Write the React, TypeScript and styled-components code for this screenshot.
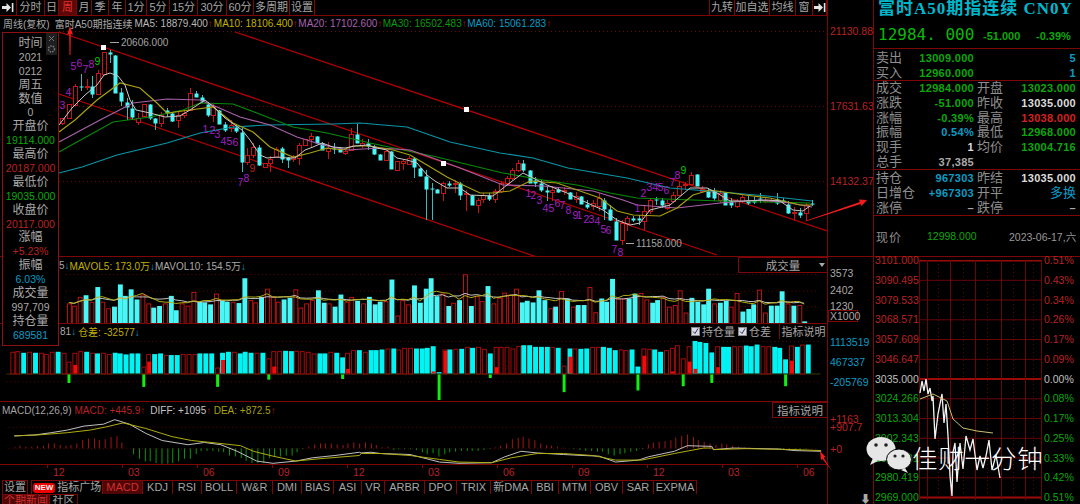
import React from "react";
import styled, { createGlobalStyle } from "styled-components";

const FONT = `"Liberation Sans", "Noto Sans CJK SC", sans-serif`;
const LINE = "#7d0606";
const RED = "#b92222";
const GREEN = "#0aa80a";
const GREY = "#a9a9a9";
const TEAL = "#0a9cc4";

const Global = createGlobalStyle`
  html, body { margin: 0; padding: 0; background: #000; }
  body { font-family: ${FONT}; font-size: 10px; color: ${GREY}; }
`;

const Page = styled.div`
  position: relative;
  display: flex;
  width: 1080px;
  height: 504px;
  overflow: hidden;
  background: #000;
`;
const Main = styled.div`
  display: flex;
  flex-direction: column;
  width: 874px;
  flex: none;
  border-right: 1px solid ${LINE};
  box-sizing: border-box;
`;
const Pane = styled.div<{ $h: number; $rule?: boolean }>`
  display: flex;
  height: ${(p) => p.$h}px;
  flex: none;
  box-sizing: border-box;
  ${(p) => (p.$rule ? `border-bottom: 1px solid ${LINE};` : "")}
`;
const Plot = styled.div<{ $rule?: boolean }>`
  display: flex;
  flex-direction: column;
  width: 828px;
  flex: none;
  box-sizing: border-box;
  border-right: 1px solid ${LINE};
  ${(p) => (p.$rule ? `border-bottom: 1px solid ${LINE};` : "")}
  min-height: 0;
`;
const Axis = styled.div<{ $top?: number }>`
  display: flex;
  flex-direction: column;
  flex: 1;
  min-width: 0;
  overflow: hidden;
  padding-top: ${(p) => p.$top ?? 0}px;
`;
const AxisLabel = styled.div<{ $h: number; $c: string }>`
  height: ${(p) => p.$h}px;
  line-height: 14px;
  padding-left: 2px;
  color: ${(p) => p.$c};
  font-size: 10.5px;
  white-space: nowrap;
  flex: none;
`;
const ScaleBox = styled.div`
  width: 30px;
  height: 12px;
  line-height: 11px;
  box-sizing: border-box;
  padding-left: 1px;
  border: 1px solid ${LINE};
  color: ${GREY};
  font-size: 10.5px;
  white-space: nowrap;
`;
const DownGlyph = styled.div`
  color: #aaa;
  font-size: 11px;
  line-height: 11px;
  text-align: right;
  padding-right: 2px;
  font-weight: bold;
`;

const Toolbar = styled.div`
  display: flex;
  height: 16px;
  flex: none;
  box-sizing: border-box;
  border-bottom: 1px solid ${LINE};
`;
const ToolBtn = styled.div<{ $w: number; $active?: boolean }>`
  width: ${(p) => p.$w}px;
  flex: none;
  box-sizing: border-box;
  display: flex;
  align-items: center;
  justify-content: center;
  border-right: 1px solid ${LINE};
  font-size: 11px;
  line-height: 15px;
  color: ${(p) => (p.$active ? "#e23030" : "#a6a6a6")};
  background: ${(p) => (p.$active ? "#5c0808" : "transparent")};
  white-space: nowrap;
`;
const ToolSpacer = styled.div`
  flex: 1;
  border-right: 1px solid ${LINE};
`;

const Legend = styled.div<{ $h: number; $left?: number }>`
  display: flex;
  align-items: center;
  height: ${(p) => p.$h}px;
  flex: none;
  padding-left: ${(p) => p.$left ?? 3}px;
  font-size: 10px;
  white-space: nowrap;
`;
const Item = styled.span<{ $c: string; $gap?: number }>`
  color: ${(p) => p.$c};
  margin-left: ${(p) => p.$gap ?? 0}px;
`;
const Up = styled.span`
  color: #b01818;
`;
const Down = styled.span`
  color: ${TEAL};
`;
const Boxed = styled.div<{ $w: number; $h: number }>`
  margin-left: auto;
  width: ${(p) => p.$w}px;
  height: ${(p) => p.$h}px;
  flex: none;
  box-sizing: border-box;
  border: 1px solid ${LINE};
  border-right: none;
  display: flex;
  align-items: center;
  justify-content: center;
  position: relative;
  color: #a6a6a6;
  font-size: 11.5px;
`;
const Caret = styled.span`
  position: absolute;
  right: 2px;
  top: 5px;
  width: 0;
  height: 0;
  border-left: 3px solid transparent;
  border-right: 3px solid transparent;
  border-top: 4px solid #aaa;
`;
const Checks = styled.div`
  margin-left: auto;
  display: flex;
  align-items: center;
  height: 13px;
  font-size: 11px;
  color: #a6a6a6;
`;
const Check = styled.span`
  width: 9px;
  height: 9px;
  margin: 0 2px 0 3px;
  background: #d8dce8;
  border: 1px solid #888;
  box-sizing: border-box;
  display: flex;
  align-items: center;
  justify-content: center;
`;
const Explain = styled.span`
  width: 47px;
  margin-left: 8px;
  border-left: 1px solid ${LINE};
  text-align: center;
`;
const Chart = styled.svg`
  display: block;
  flex: 1;
  min-height: 0;
  width: 827px;
`;

const Dates = styled.div`
  display: grid;
  grid-template-columns: repeat(11, 75px);
  padding-left: 47px;
  height: 13px;
  flex: none;
`;
const DateCell = styled.div`
  position: relative;
  color: ${RED};
  font-size: 10.5px;
  line-height: 14px;
  padding-left: 6px;
  &::before {
    content: "";
    position: absolute;
    left: 0;
    top: 0;
    width: 1px;
    height: 3px;
    background: ${LINE};
  }
`;

const Tabs = styled.div<{ $pad?: number }>`
  display: flex;
  padding-left: 2px;
  padding-top: ${(p) => p.$pad ?? 0}px;
  height: 100%;
  box-sizing: border-box;
`;
const Tab = styled.div<{ $w: number; $active?: boolean; $gap?: number }>`
  width: ${(p) => p.$w}px;
  margin-left: ${(p) => p.$gap ?? 0}px;
  flex: none;
  box-sizing: border-box;
  display: flex;
  align-items: center;
  justify-content: center;
  gap: 2px;
  border: 1px solid ${LINE};
  border-left-width: ${(p) => (p.$gap === undefined ? 0 : 1)}px;
  border-bottom: none;
  font-size: 11px;
  line-height: 13px;
  white-space: nowrap;
  overflow: hidden;
  color: ${(p) => (p.$active ? "#d03030" : "#a6a6a6")};
  background: ${(p) => (p.$active ? "#4e0606" : "transparent")};
`;
const NewBadge = styled.span`
  background: #e00;
  color: #f4f4f4;
  border-radius: 3px;
  padding: 0 2px;
  font-size: 8px;
  font-weight: bold;
  line-height: 10px;
`;

const InfoBox = styled.div`
  position: absolute;
  left: 2px;
  top: 32px;
  width: 57px;
  height: 314px;
  box-sizing: border-box;
  background: #000;
  border: 1px solid #8f1010;
  display: grid;
  grid-auto-rows: 13.9px;
  padding-top: 3px;
  justify-items: center;
`;
const InfoLine = styled.div<{ $c?: string; $zh?: boolean }>`
  color: ${(p) => p.$c ?? GREY};
  font-size: ${(p) => (p.$zh ? 12 : 10.5)}px;
  line-height: 14px;
  white-space: nowrap;
`;
const BoxIcons = styled.svg`
  position: absolute;
  right: 0;
  top: 0;
  width: 12px;
  height: 24px;
`;

const Side = styled.div`
  flex: 1;
  min-width: 0;
  display: flex;
  flex-direction: column;
`;
const Headline = styled.div`
  height: 49px;
  flex: none;
  box-sizing: border-box;
  border-bottom: 1px solid ${LINE};
  padding-left: 4px;
`;
const Title = styled.div`
  color: #00b8cc;
  font-family: "Liberation Serif", "Noto Sans CJK SC", serif;
  font-weight: bold;
  font-size: 17px;
  line-height: 18px;
  letter-spacing: 1px;
  white-space: nowrap;
`;
const PriceRow = styled.div`
  display: flex;
  align-items: baseline;
  margin-top: 7px;
  color: ${GREEN};
  white-space: nowrap;
`;
const BigPrice = styled.span`
  font-family: "DejaVu Sans Mono", monospace;
  font-size: 16px;
  width: 105px;
  color: #0ab80a;
`;
const Delta = styled.span<{ $w: number }>`
  width: ${(p) => p.$w}px;
  font-weight: bold;
  font-size: 11px;
  flex: none;
`;
const Block = styled.div<{ $h: number; $pad?: number; $rule?: boolean }>`
  height: ${(p) => p.$h}px;
  flex: none;
  box-sizing: border-box;
  padding-top: ${(p) => p.$pad ?? 0}px;
  display: flex;
  flex-direction: column;
  ${(p) => (p.$rule === false ? "" : `border-bottom: 1px solid ${LINE};`)}
`;
const Row = styled.div`
  flex: 1;
  display: grid;
  grid-template-columns: 101px 99px;
  align-items: center;
  padding-left: 2px;
  min-height: 0;
`;
const Half = styled.div<{ $inset?: number }>`
  display: flex;
  justify-content: space-between;
  align-items: center;
  white-space: nowrap;
  padding-right: ${(p) => p.$inset ?? 0}px;
`;
const Label = styled.span`
  color: #8f8f8f;
  font-size: 13px;
  line-height: 14px;
`;
const Val = styled.span<{ $c: string }>`
  color: ${(p) => p.$c};
  font-size: 11px;
  font-weight: bold;
  line-height: 14px;
  letter-spacing: 0.3px;
`;
const ZhVal = styled.span`
  color: ${TEAL};
  font-size: 13px;
  line-height: 14px;
`;
const NowRow = styled.div`
  display: flex;
  align-items: center;
  height: 41px;
  flex: none;
  box-sizing: border-box;
  padding-left: 2px;
  border-bottom: 1px solid ${LINE};
  white-space: nowrap;
`;
const NowLabel = styled.span`
  width: 51px;
  color: #8f8f8f;
  font-size: 12px;
  letter-spacing: 1px;
`;
const NowPrice = styled.span`
  width: 82px;
  color: ${GREEN};
  font-size: 10.5px;
`;
const NowDate = styled.span`
  color: #9a9a9a;
  font-size: 10.5px;
`;
const Mini = styled.div`
  display: flex;
  padding-top: 3px;
  flex: 1;
`;
const MiniScale = styled.div<{ $w: number; $pad?: number }>`
  width: ${(p) => p.$w}px;
  padding-left: ${(p) => p.$pad ?? 1}px;
  flex: none;
  margin-top: -9px;
  box-sizing: border-box;
`;
const MiniLabel = styled.div<{ $c: string }>`
  height: 19.75px;
  line-height: 19.75px;
  color: ${(p) => p.$c};
  font-size: 10.5px;
  white-space: nowrap;
`;
const MiniChart = styled.svg`
  width: 123px;
  height: 240px;
  flex: none;
  display: block;
`;

const Overlay = styled.svg`
  position: absolute;
  left: 0;
  top: 0;
  width: 1080px;
  height: 504px;
  pointer-events: none;
`;
const Watermark = styled.div`
  position: absolute;
  left: 912px;
  top: 441px;
  color: #fff;
  font-family: "Noto Sans CJK SC", sans-serif;
  font-weight: 300;
  font-size: 25.5px;
  line-height: 32px;
  letter-spacing: 0.8px;
  white-space: nowrap;
`;

type C = [number, 0 | 1, number, number, number?, number?];
const candles: C[] = [
  [62,0,118,123,118,125],[69,0,104,118],[75,0,86,105,84,106],[81,1,86,87,74,91],[87,0,86,87,79,90],[92,1,86,94,76,98],[98,0,73,94,70,95],[104,0,52,74],[110,1,52,54,50,63],[115,1,55,93],
  [121,1,92,101,88,106],[127,1,102,107,98,120],[132,1,108,117,100,120],[138,0,118,122,113,125],[144,0,104,116],[150,1,104,118,104,120],[155,1,118,123,118,130],[161,0,115,123,112,127],[167,1,110,113,108,117],[172,1,113,121,113,122],
  [178,0,115,120,112,128],[184,0,113,115,110,118],[190,0,93,110,88,110],[196,1,93,97,91,97],[202,1,97,101,95,103],[208,1,104,115,102,117],[213,0,106,115,104,122],[219,1,110,124],[225,1,124,130,122,132],[231,0,125,128,120,132],
  [236,1,127,131,125,133],[242,1,132,162,128,172],[247,0,155,162,148,165],[253,0,147,155,143,158],[259,1,147,165,145,166],[265,0,163,167],[270,0,159,163,156,172],[276,0,149,157,147,157],[282,1,148,159,147,163],[288,1,157,160,157,168],
  [293,0,157,159,155,162],[299,0,145,158,143,165],[305,0,139,145],[311,0,136,139,133,148],[317,1,136,143],[322,1,143,150,142,150],[328,0,148,151,142,159],[334,1,148,149,143,154],[340,1,148,152],[345,0,151,153,150,155],
  [351,0,134,150,128,150],[357,1,134,143,124,143],[362,0,143,145,139,148],[368,1,143,146,139,150],[374,1,146,154,145,155],[380,1,154,160],[386,0,151,160,150,160],[391,1,151,169],[397,0,161,170],[403,0,161,163,159,170],
  [409,0,158,164,156,165],[414,1,158,167,157,178],[420,1,168,176],[426,1,176,189,170,220],[432,1,188,189,183,220],[437,1,189,193],[443,0,183,193,182,201],[449,1,183,185,181,187],[455,0,183,184,180,193],[460,1,183,195,182,200],
  [466,0,193,194,190,211],[472,1,195,205],[478,0,200,205,198,213],[483,0,195,199,193,203],[489,1,195,199,193,201],[495,0,191,199,189,203],[501,0,183,191,181,193],[507,0,178,183,176,186],[512,0,170,178,168,180],[518,0,163,170,160,172],
  [523,1,163,170,160,172],[530,1,170,183],[535,1,180,183,177,187],[541,1,183,190,180,192],[547,1,190,192,186,201],[552,0,190,192,186,201],[558,1,189,192,188,193],[564,0,190,191,187,195],[570,1,192,199],[576,0,196,199,192,203],
  [581,1,196,204],[587,1,204,207,200,209],[593,0,203,206,200,210],[599,0,198,206,193,211],[604,1,200,209,198,220],[610,1,209,220,205,221],[616,1,221,240,218,240],[622,0,223,240,220,245],[627,0,218,223,216,231],[633,1,218,220,216,222],
  [639,1,218,220,215,225],[644,0,211,221,205,230],[650,0,200,211,198,214],[656,1,199,200,197,205],[662,1,200,205,198,208],[667,0,203,208,200,210],[673,0,195,201,192,203],[679,0,186,195,182,196],[685,0,184,185,182,190],[691,0,175,184,172,185],
  [697,1,174,186],[702,0,189,191,186,193],[708,1,191,197,188,198],[714,1,191,198,188,201],[720,0,193,200,190,203],[725,1,192,205],[731,1,201,205,198,208],[737,0,201,206,199,208],[742,0,197,201,195,203],[748,1,200,203,196,205],
  [754,1,200,202,197,204],[760,1,198,199,193,203],[765,0,200,201,197,203],[771,0,200,201,198,203],[777,1,199,203,193,205],[783,1,200,202,198,204],[788,1,204,213,201,214],[794,0,212,213,207,220],[800,1,212,215,208,218],[806,0,205,213,203,221],[812,1,203,204,200,206],
];

const volume = "r405 r412 r385 c380 r400 c355 r400 r420 c415 c347 c382 c362 c393 r378 r405 c418 c413 r405 c382 c426 r405 r412 r370 c400 c402 c408 r375 c397 c400 r400 c404 c328 r395 r402 c385 r360 r385 r400 c393 c388 r362 r418 r405 r395 c365 c403 r405 c415 c378 r400 r385 c397 r405 c385 c408 c400 r398 c332 r442 r395 r408 c350 c403 c360 c328 c383 r375 c413 r403 c395 r316 c413 r383 r398 c352 r405 r388 r372 r378 r360 c402 c397 c402 c365 c395 r420 c415 r367 c390 r415 c410 c410 r355 r432 c390 c400 c330 r390 r390 c390 c375 r373 r393 c403 c395 r385 r415 r410 r365 r433 c388 c400 c408 c360 r405 c403 c397 r415 r373 c430 c422 c408 r363 r433 c412 c412 c368 r405 c412 r410 c460"
  .split(" ")
  .map((s) => ({ cyan: s[0] === "c", top: +s.slice(1) / 3 + 168 }));

const position = "r45 r43 c48 r45 c48 r48 r52 r45 c45 r48 r75:0:140 r48:85 r43 c45 r48 c50 r48 r52 c48 c50 c53 c50 c50 r90:0:152 r52:75 c52 c50 r55 c55 c55 r52 r52 r52 c50 c50 c50 r93:0:152 c48:70 c45 r45 c50 c45 c48 r48 c48 r65:0:130 r43:90 r43 c42 c43 r42 r43 r45 r50 c50 c50 r45 c48 c62:0:128 r48:97 r40 c40 r45 c40 c40 c38 r35 c35 r38 r33 r33 c35 c35 c33 c28:105 c107:0:192 r38:42 c38 r36 c36 r30 c33 r30 r36 c50:0:125 r30:92 r30 r30 r35 r27 c25 c25 c30 c30 c30 r30 c33 r87:0:168 c35:60 r35 c36 c35 r30 r30 c30 c33 c40 r38 r40 c38 c90:0:163 r35:57 r36 c38 c45 r40 r33:105 r25 r65:0:150 r28:75 c12:97 c15 c18 c47:0:140 r28:92 c30 c30 r28 r28 c26 c28 c23 r28 r28 c30 c33 c68:0:150 r26:72 c30 r23 c23"
  .split(" ")
  .map((s) => {
    const [head, fill, drop] = s.slice(1).split(":").map(Number);
    return { cyan: s[0] === "c", top: head / 3 + 336, fill: fill ? fill / 3 + 336 : 0, drop: drop ? drop / 3 + 336 : 0 };
  });

const histogram = [3,8,5,5,7,8,15,15,10,8,10,15,25,30,30,25,28,35,37,18,0,-18,-32,-40,-40,-45,-47,-47,-45,-40,-32,-32,-18,-8,-8,-8,-10,-12,-22,-25,-30,-38,-45,-45,-45,-30,-25,-25,-22,-22,-12,-2,5,12,15,15,15,12,10,15,18,15,18,15,10,3,5,-5,-3,-2,-3,-5,-12,-18,-15,-25,-18,-12,-10,-8,-8,-8,-8,-5,-2,3,8,15,28,32,35,30,25,15,10,8,5,2,0,-2,-5,-8,-8,-10,-10,-18,-22,-18,-15,-10,-8,-2,12,18,20,22,25,33,38,42,35,25,20,15,10,15,12,8,5,3,2,1,1,0,0,-1,-2,-2,-3,-3,-2];

type P = [number, number][];
const ma5: P = [[59,125],[72,108],[85,95],[97,85],[104,75],[110,73],[118,76],[125,85],[130,100],[136,110],[150,113],[165,117],[180,116],[190,110],[205,100],[215,108],[225,118],[242,130],[250,140],[260,155],[267,158],[277,157],[287,158],[295,158],[305,150],[313,147],[322,143],[333,147],[345,148],[355,146],[367,145],[377,148],[387,150],[397,158],[407,160],[417,163],[427,175],[435,181],[447,188],[460,188],[470,195],[493,196],[507,185],[523,173],[533,178],[547,185],[567,193],[583,201],[603,210],[617,220],[630,225],[640,223],[650,210],[670,205],[690,188],[707,188],[717,193],[730,201],[743,201],[767,200],[780,201],[793,210],[803,211],[810,206]];
const ma10: P = [[59,132],[75,120],[97,100],[120,83],[140,88],[157,103],[167,113],[190,110],[213,107],[233,123],[253,132],[270,147],[293,157],[310,153],[327,148],[343,150],[353,146],[370,146],[393,150],[410,155],[427,165],[447,177],[463,185],[480,193],[493,193],[510,191],[530,181],[557,183],[580,191],[600,198],[617,211],[633,215],[660,216],[677,208],[693,195],[710,190],[745,195],[770,198],[800,205],[812,205]];
const ma20: P = [[59,142],[100,120],[133,103],[167,99],[200,100],[217,107],[240,117],[270,125],[297,137],[323,145],[347,150],[380,148],[410,150],[430,157],[460,168],[503,185],[543,186],[593,191],[623,200],[637,205],[677,208],[720,203],[760,200],[790,203],[812,207]];
const ma30: P = [[59,152],[113,122],[150,117],[183,110],[200,103],[233,104],[262,115],[293,127],[327,133],[370,143],[403,150],[437,157],[482,168],[503,173],[543,180],[577,185],[610,193],[637,198],[693,200],[720,201],[810,203]];
const ma60: P = [[59,173],[82,167],[117,155],[167,143],[200,133],[233,127],[267,125],[333,124],[360,123],[407,127],[450,142],[500,153],[533,158],[568,168],[627,178],[670,188],[733,193],[767,196],[812,201]];

const scaleM = (pts: number[]): P => {
  const out: P = [];
  for (let i = 0; i < pts.length; i += 2) out.push([pts[i] / 3, pts[i + 1] / 3 + 336]);
  return out;
};
const shift = (p: P, dx: number): P => p.map(([x, y]) => [x + dx, y]);
const diff: P = [
  ...scaleM([17,298,80,295,130,288,180,280,230,268,290,262,325,248,370,262,420,290,470,312,550,325,600,318,650,325,700,345,760,375,810,382,880,375,930,365,1000,358,1075,348]),
  ...shift(scaleM([0,350,30,348,60,352,150,355,190,365,240,378,300,382,400,380,440,362,490,345,540,350,620,355,680,358,730,360,780,378,850,372,880,362,960,345,1000,328,1075,330]), 360),
  ...shift(scaleM([0,340,60,335,200,338,250,343,330,345]), 720),
];
const dea: P = [
  ...scaleM([17,298,90,295,180,288,250,280,300,270,350,258,420,275,500,300,560,312,640,320,710,328,750,345,810,360,880,375,950,368,1075,358]),
  ...shift(scaleM([0,352,60,352,150,358,240,370,300,378,400,380,460,365,540,352,620,352,710,358,780,372,860,372,960,352,1050,335,1075,335]), 360),
  ...shift(scaleM([0,340,100,337,250,340,330,343]), 720),
];

const tdMarks: [string, number, number, string?][] = [
  ["3",62,109],["4",68,96],["5",73,70],["6",79,67],["7",85,73],["8",91,68],["9",97,65,"#0c0"],
  ["1",205,133],["2",212,134],["3",217,138],["4",223,145],["5",229,145],["6",235,146],["7",240,186],["8",246,182],["9",252,172,"#b22"],
  ["1",528,197],["2",533,199],["3",539,204],["4",545,212],["5",551,212],["6",557,207],["7",562,209],["8",568,214],["9",575,219],["1",579,219],["2",586,223],["3",591,223],["4",597,225],["5",603,233],["6",608,234],["7",614,253],["8",620,255.5],
  ["1",637,212],["2",643,197],["3",649,191],["4",655,191],["5",660,191],["6",666,194],["7",672,186],["8",677,179],["9",683,174,"#0c0"],
];

const pts = (p: P) => p.map(([x, y]) => `${x.toFixed(1)},${y.toFixed(1)}`).join(" ");

const barX = (base: number, i: number) => Math.round(base + 5.775 * i);

const volTops = volume.map((b) => 323 - b.top);
const avg = (n: number) =>
  volTops.map((_, i) => {
    const from = Math.max(0, i - n + 1);
    const slice = volTops.slice(from, i + 1);
    return [barX(61.7, i), 323 - 4 - (slice.reduce((a, b) => a + b, 0) / slice.length) * 0.85] as [number, number];
  });

function CandleChart() {
  return (
    <Chart viewBox="0 30 827 226">
      {[31, 106, 181].map((y) => (
        <line key={y} x1={59} x2={827} y1={y + 0.5} y2={y + 0.5} stroke="#6a0808" strokeDasharray="1 3" />
      ))}
      <g stroke="#b40000" strokeWidth={1.3} fill="none">
        <line x1={235} y1={32} x2={827} y2={231} />
        <line x1={59} y1={32} x2={717} y2={255} />
        <line x1={59} y1={94} x2={534} y2={256} />
      </g>
      {candles.map(([x, kind, top, bottom, wt, wb], i) => {
        const color = kind ? "#4af7f7" : "#c81414";
        const hi = wt ?? top;
        const lo = wb ?? bottom;
        return (
          <g key={i}>
            <line x1={x + 0.5} x2={x + 0.5} y1={hi} y2={lo} stroke={kind ? "#3fb8bc" : color} />
            <rect
              x={x - 1.5}
              y={top + 0.5}
              width={4}
              height={Math.max(bottom - top, 1)}
              fill={kind ? color : "#000"}
              stroke={kind ? "none" : color}
            />
          </g>
        );
      })}
      <g fill="none" strokeWidth={1}>
        <polyline points={pts(ma60)} stroke="#0796a8" strokeWidth={1.2} />
        <polyline points={pts(ma30)} stroke="#078a07" strokeWidth={1.2} />
        <polyline points={pts(ma20)} stroke="#a860a8" strokeWidth={1.2} />
        <polyline points={pts(ma10)} stroke="#a8a010" strokeWidth={1.2} />
        <polyline points={pts(ma5)} stroke="#c8c8c8" />
      </g>
      <g fill="#fff">
        <rect x={101} y={45} width={5} height={5} />
        <rect x={464} y={107} width={5} height={5} />
        <rect x={441} y={161} width={5} height={5} />
      </g>
      <g fontFamily="Liberation Sans" fontSize={10.5} fill="#a020c0">
        {tdMarks.map(([t, x, y, c], i) => (
          <text key={i} x={x - 2.5} y={y} fill={c ?? "#a020c0"}>
            {t}
          </text>
        ))}
      </g>
      <g fontFamily="Liberation Sans" fontSize={10} fill="#a4a4a4">
        <text x={121} y={46}>20606.000</text>
        <line x1={110} x2={119} y1={42.5} y2={42.5} stroke="#a4a4a4" />
        <text x={636} y={247}>11158.000</text>
        <line x1={626} x2={634} y1={243.5} y2={243.5} stroke="#a4a4a4" />
      </g>
    </Chart>
  );
}

function VolumeChart() {
  return (
    <Chart viewBox="0 272 827 51">
      {[273, 290, 306].map((y) => (
        <line key={y} x1={59} x2={827} y1={y + 0.5} y2={y + 0.5} stroke="#5a0808" strokeDasharray="1 3" />
      ))}
      {volume.map((b, i) => {
        const x = barX(61.7, i) - 2;
        return b.cyan ? (
          <rect key={i} x={x} y={b.top} width={5} height={323 - b.top} fill="#4af7f7" />
        ) : (
          <rect key={i} x={x + 0.5} y={b.top + 0.5} width={4} height={323 - b.top} fill="#000" stroke="#c01414" />
        );
      })}
      <polyline points={pts(avg(10))} fill="none" stroke="#c8c8c8" />
      <polyline points={pts(avg(5))} fill="none" stroke="#b8b010" />
    </Chart>
  );
}

function PositionChart() {
  return (
    <Chart viewBox="0 337 827 64">
      {[340, 381].map((y) => (
        <line key={y} x1={0} x2={827} y1={y + 0.5} y2={y + 0.5} stroke="#5a0808" strokeDasharray="1 3" />
      ))}
      <line x1={0} x2={827} y1={373.5} y2={373.5} stroke="#3a3a00" />
      {position.map((b, i) => {
        const x = barX(5.7, i) - 2;
        return (
          <g key={i}>
            {b.cyan ? (
              <rect x={x} y={b.top} width={5} height={373 - b.top} fill="#00f4f4" />
            ) : (
              <rect x={x + 0.5} y={b.top + 0.5} width={4} height={373 - b.top} fill="#000" stroke="#a80c0c" />
            )}
            {b.fill > 0 && <rect x={x + 1} y={b.fill} width={4} height={373 - b.fill} fill="#f00c0c" />}
            {b.drop > 0 && <rect x={x + 1} y={374} width={3} height={b.drop - 374} fill="#10f010" />}
          </g>
        );
      })}
    </Chart>
  );
}

function MacdChart() {
  return (
    <Chart viewBox="0 417 827 47">
      {[426, 448].map((y) => (
        <line key={y} x1={0} x2={827} y1={y + 0.5} y2={y + 0.5} stroke="#5a0808" strokeDasharray="1 3" />
      ))}
      {histogram.map((h, i) => {
        const x = barX(5.7, i) + 0.5;
        return <line key={i} x1={x} x2={x} y1={448} y2={448 - h / 3} stroke={h > 0 ? "#a81616" : "#0a9a0a"} />;
      })}
      <polyline points={pts(diff)} fill="none" stroke="#c4c4c4" />
      <polyline points={pts(dea)} fill="none" stroke="#b4b010" />
    </Chart>
  );
}

const collapse: P = [[920,393],[922,381],[924,391],[926,379],[928,394],[930,388],[932,401],[933,396],[935,439],[938,414],[942,394],[944,423],[946,404],[948,436],[950,476],[952,496],[953,452],[955,443],[957,482],[960,443],[963,469],[966,436],[970,450],[973,439],[977,470],[980,456],[983,468],[986,456],[989,440],[992,470],[996,455],[1000,478]];
const avgLine: P = [[920,399],[933,394],[947,401],[953,419],[963,428],[977,431],[993,433]];
const miniRows = [260, 279.8, 299.5, 319.3, 339, 358.8, 378.5, 398.3, 418, 437.8, 457.5, 477.3, 497];

function MiniGrid() {
  return (
    <MiniChart viewBox="919 260 123 240">
      {miniRows.map((y, i) => {
        const heavy = i === 0 || i === 6 || i === 12;
        return <line key={y} x1={919} x2={1042} y1={y + 0.5} y2={y + 0.5} stroke={heavy ? "#9c0a0a" : "#6a0606"} strokeWidth={heavy ? 2 : 1} />;
      })}
      {[919.5, 927.5, 950.5, 975.5, 1001.5, 1025.5, 1041.5].map((x) => (
        <line key={x} x1={x} x2={x} y1={260} y2={500} stroke="#6a0606" />
      ))}
      {[938.5, 963.5, 987.5, 1013.5, 1033.5].map((x) => (
        <line key={x} x1={x} x2={x} y1={260} y2={500} stroke="#5a0606" strokeDasharray="1 3" />
      ))}
      <polyline points={pts(collapse)} fill="none" stroke="#f4f4f4" strokeWidth={1.3} />
      <polyline points={pts(avgLine)} fill="none" stroke="#c8c070" />
    </MiniChart>
  );
}

function ArrowGlyph() {
  return (
    <svg width="12" height="11" viewBox="0 0 12 11">
      <path d="M0 4h4.5V1l4.5 4.5L4.5 10V7H0z" fill="#e4e4e4" />
      <rect x="9.8" y="1" width="1.6" height="9" fill="#e4e4e4" />
    </svg>
  );
}

const toolsLeft: [string, number, boolean?][] = [
  ["分时",28],["日",14],["周",18,true],["月",15],["季",17],["年",17],["1分",21],["5分",23],["15分",28],["30分",29],["60分",27],["多周期",36],["设置",25],
];
const toolsRight: [string, number][] = [["九转",25],["加自选",35],["均线",26],["窗",17]];

const tabs: [string, number, boolean?][] = [
  ["KDJ",30],["RSI",29],["BOLL",35],["W&R",36],["DMI",29],["BIAS",32],["ASI",28],["VR",23],["ARBR",40],["DPO",32],["TRIX",34],["新DMA",41],["BBI",27],["MTM",32],["OBV",32],["SAR",31],["EXPMA",43],
];

const info: [string, string?, boolean?][] = [
  ["时间",undefined,true],["2021"],["0212"],["周五",undefined,true],["数值",undefined,true],["0"],
  ["开盘价",undefined,true],["19114.000",GREEN],["最高价",undefined,true],["20187.000",RED],
  ["最低价",undefined,true],["19035.000",GREEN],["收盘价",undefined,true],["20117.000",RED],
  ["涨幅",undefined,true],["+5.23%",RED],["振幅",undefined,true],["6.03%",TEAL],
  ["成交量",undefined,true],["997,709"],["持仓量",undefined,true],["689581",TEAL],
];

type Q = [string, string, string];
const quoteA: [Q, Q][] = [
  [["成交","12984.000",GREEN],["开盘","13023.000",GREEN]],
  [["涨跌","-51.000",GREEN],["昨收","13035.000","#dcdcdc"]],
  [["涨幅","-0.39%",GREEN],["最高","13038.000","#d62020"]],
  [["振幅","0.54%",TEAL],["最低","12968.000",GREEN]],
  [["现手","1","#dcdcdc"],["均价","13004.716",GREEN]],
  [["总手","37,385",GREY],["","",GREY]],
];

const leftScale: [string, string][] = [
  ["3101.000",RED],["3090.495",RED],["3079.533",RED],["3068.571",RED],["3057.609",RED],["3046.647",RED],["3035.000","#c0c0c0"],
  ["3024.266",GREEN],["3013.304",GREEN],["3002.343",GREEN],["2991.381",GREEN],["2980.419",GREEN],["2969.000",GREEN],
];
const rightScale: [string, string][] = [
  ["0.51%",RED],["0.43%",RED],["0.34%",RED],["0.26%",RED],["0.17%",RED],["0.09%",RED],["0.00%","#c0c0c0"],
  ["0.08%",GREEN],["0.17%",GREEN],["0.25%",GREEN],["0.33%",GREEN],["0.42%",GREEN],["0.51%",GREEN],
];

export default function App() {
  return (
    <Page>
      <Global />
      <Main>
        <Pane $h={16}>
          <Plot>
            <Toolbar>
              <ToolBtn $w={17}><ArrowGlyph /></ToolBtn>
              {toolsLeft.map(([t, w, a]) => (
                <ToolBtn key={t} $w={w} $active={a}>{t}</ToolBtn>
              ))}
              <ToolSpacer />
              {toolsRight.map(([t, w]) => (
                <ToolBtn key={t} $w={w}>{t}</ToolBtn>
              ))}
              <ToolBtn $w={14}><ArrowGlyph /></ToolBtn>
            </Toolbar>
          </Plot>
          <Axis />
        </Pane>

        <Pane $h={241} $rule>
          <Plot>
            <Legend $h={14}>
              <Item $c={GREY}>周线(复权)</Item>
              <Item $c={GREY} $gap={5}>富时A50期指连续</Item>
              <Item $c="#b8b8b8" $gap={2}>MA5: 18879.400<Up>↑</Up></Item>
              <Item $c="#c0b000" $gap={1}>MA10: 18106.400<Up>↑</Up></Item>
              <Item $c="#a860b0" $gap={0.5}>MA20: 17102.600<Up>↑</Up></Item>
              <Item $c="#0a9a0a" $gap={0.5}>MA30: 16502.483<Up>↑</Up></Item>
              <Item $c={TEAL} $gap={0.5}>MA60: 15061.283<Up>↑</Up></Item>
            </Legend>
            <CandleChart />
          </Plot>
          <Axis $top={8}>
            <AxisLabel $h={75} $c={RED}>21130.889</AxisLabel>
            <AxisLabel $h={75} $c={RED}>17631.630</AxisLabel>
            <AxisLabel $h={75} $c={RED}>14132.370</AxisLabel>
          </Axis>
        </Pane>

        <Pane $h={67}>
          <Plot $rule>
            <Legend $h={16} $left={59}>
              <Item $c={GREY}>5<Down>↓</Down></Item>
              <Item $c="#c0b000">MAVOL5: 173.0万<Down>↓</Down></Item>
              <Item $c={GREY}>MAVOL10: 154.5万<Down>↓</Down></Item>
              <Boxed $w={89} $h={16}>成交量<Caret /></Boxed>
            </Legend>
            <VolumeChart />
          </Plot>
          <Axis $top={9}>
            <AxisLabel $h={16.5} $c={GREY}>3573</AxisLabel>
            <AxisLabel $h={16.5} $c={GREY}>2402</AxisLabel>
            <AxisLabel $h={11} $c={GREY}>1230</AxisLabel>
            <ScaleBox>X1000</ScaleBox>
          </Axis>
        </Pane>

        <Pane $h={78}>
          <Plot $rule>
            <Legend $h={14} $left={60}>
              <Item $c={GREY}>81<Down>↓</Down></Item>
              <Item $c="#c0b000" $gap={2}>仓差: -32577<Down>↓</Down></Item>
              <Checks>
                <Check><svg width="7" height="7" viewBox="0 0 7 7"><path d="M1 3.5l2 2 3-5" stroke="#335" fill="none" /></svg></Check>持仓量
                <Check><svg width="7" height="7" viewBox="0 0 7 7"><path d="M1 3.5l2 2 3-5" stroke="#335" fill="none" /></svg></Check>仓差
                <Explain>指标说明</Explain>
              </Checks>
            </Legend>
            <PositionChart />
          </Plot>
          <Axis $top={11}>
            <AxisLabel $h={20} $c={TEAL}>1113519</AxisLabel>
            <AxisLabel $h={20} $c={TEAL}>467337</AxisLabel>
            <AxisLabel $h={20} $c={TEAL}>-205769</AxisLabel>
          </Axis>
        </Pane>

        <Pane $h={63}>
          <Plot $rule>
            <Legend $h={16} $left={2}>
              <Item $c="#a4a4a4">MACD(12,26,9)</Item>
              <Item $c={RED} $gap={3}>MACD: +445.9<Up>↑</Up></Item>
              <Item $c="#c4c4c4" $gap={5}>DIFF: +1095<Up>↑</Up></Item>
              <Item $c="#a8a010" $gap={2.5}>DEA: +872.5<Up>↑</Up></Item>
              <Boxed $w={55} $h={16}>指标说明</Boxed>
            </Legend>
            <MacdChart />
          </Plot>
          <Axis $top={10}>
            <AxisLabel $h={8} $c={RED}>+1163</AxisLabel>
            <AxisLabel $h={22} $c={RED}>+907.7</AxisLabel>
            <AxisLabel $h={14} $c={RED}>+0</AxisLabel>
          </Axis>
        </Pane>

        <Pane $h={14}>
          <Plot>
            <Dates>
              {["12","03","06","09","12","03","06","09","12","03","06"].map((d, i) => (
                <DateCell key={i}>{d}</DateCell>
              ))}
            </Dates>
          </Plot>
          <Axis />
        </Pane>

        <Pane $h={15}>
          <Plot>
            <Tabs $pad={1}>
              <Tab $w={26} $gap={0}>设置</Tab>
              <Tab $w={72} $gap={3}><NewBadge>NEW</NewBadge>指标广场</Tab>
              <Tab $w={40} $active>MACD</Tab>
              {tabs.map(([t, w]) => (
                <Tab key={t} $w={w}>{t}</Tab>
              ))}
            </Tabs>
          </Plot>
          <Axis />
        </Pane>

        <Pane $h={11}>
          <Plot>
            <Tabs>
              <Tab $w={48} $gap={0} $active>个期新闻</Tab>
              <Tab $w={28}>社区</Tab>
            </Tabs>
          </Plot>
          <Axis><DownGlyph>⬇</DownGlyph></Axis>
        </Pane>
      </Main>

      <Side>
        <Headline>
          <Title>富时A50期指连续 CN0Y</Title>
          <PriceRow>
            <BigPrice>12984. 000</BigPrice>
            <Delta $w={53}>-51.000</Delta>
            <Delta $w={40}>-0.39%</Delta>
          </PriceRow>
        </Headline>

        <Block $h={32} $pad={2}>
          <Row>
            <Half $inset={3}><Label>卖出</Label><Val $c={GREEN}>13009.000</Val></Half>
            <Half><span /><Val $c={TEAL}>5</Val></Half>
          </Row>
          <Row>
            <Half $inset={3}><Label>买入</Label><Val $c={GREEN}>12960.000</Val></Half>
            <Half><span /><Val $c={TEAL}>1</Val></Half>
          </Row>
        </Block>

        <Block $h={89}>
          {quoteA.map(([a, b]) => (
            <Row key={a[0]}>
              <Half $inset={3}><Label>{a[0]}</Label><Val $c={a[2]}>{a[1]}</Val></Half>
              <Half><Label>{b[0]}</Label><Val $c={b[2]}>{b[1]}</Val></Half>
            </Row>
          ))}
        </Block>

        <Block $h={46} $pad={1}>
          <Row>
            <Half $inset={3}><Label>持仓</Label><Val $c={TEAL}>967303</Val></Half>
            <Half><Label>昨结</Label><Val $c="#dcdcdc">13035.000</Val></Half>
          </Row>
          <Row>
            <Half $inset={3}><Label>日增仓</Label><Val $c={TEAL}>+967303</Val></Half>
            <Half><Label>开平</Label><ZhVal>多换</ZhVal></Half>
          </Row>
          <Row>
            <Half $inset={3}><Label>涨停</Label><Val $c={GREY}>–</Val></Half>
            <Half><Label>跌停</Label><Val $c={GREY}>–</Val></Half>
          </Row>
        </Block>

        <NowRow>
          <NowLabel>现价</NowLabel>
          <NowPrice>12998.000</NowPrice>
          <NowDate>2023-06-17,六</NowDate>
        </NowRow>

        <Mini>
          <MiniScale $w={45}>
            {leftScale.map(([t, c]) => (
              <MiniLabel key={t} $c={c}>{t}</MiniLabel>
            ))}
          </MiniScale>
          <MiniGrid />
          <MiniScale $w={39} $pad={2}>
            {rightScale.map(([t, c], i) => (
              <MiniLabel key={i} $c={c}>{t}</MiniLabel>
            ))}
          </MiniScale>
        </Mini>
      </Side>

      <InfoBox>
        {info.map(([t, c, zh], i) => (
          <InfoLine key={i} $c={c} $zh={zh}>{t}</InfoLine>
        ))}
        <BoxIcons viewBox="0 0 12 24">
          <rect x="0" y="0" width="11" height="22" fill="#1e1e1e" />
          <path d="M3 3l5 5M8 3l-5 5" stroke="#777" />
          <circle cx="5.5" cy="16" r="3" fill="none" stroke="#777" strokeWidth="1.5" strokeDasharray="1.5 1" />
        </BoxIcons>
      </InfoBox>

      <Overlay viewBox="0 0 1080 504">
        <polygon points="70,26 73,35 70.8,34 70.5,55 69.5,55 69.2,34 67,35" fill="#f01c1c" />
        <polygon points="867,200 859,199.5 859.8,202 805,221 805.3,221.6 860.5,204 861.5,206" fill="#f01c1c" />
        <polygon points="820,451 821,460 822.5,459 832,471 823.8,458 825.5,457" fill="#f01c1c" />
        <ellipse cx="881" cy="449" rx="14.5" ry="12" fill="#e6e6e6" />
        <path d="M873 458l-3 7 8-4z" fill="#e6e6e6" />
        <ellipse cx="899" cy="459.5" rx="12.5" ry="10.5" fill="#e6e6e6" stroke="#000" strokeWidth="1" />
        <path d="M905 468l3 5-7-3z" fill="#e6e6e6" />
        <circle cx="876" cy="445" r="1.8" fill="#222" />
        <circle cx="886" cy="445" r="1.8" fill="#222" />
        <circle cx="895" cy="456" r="1.6" fill="#222" />
        <circle cx="903" cy="456" r="1.6" fill="#222" />
      </Overlay>
      <Watermark>佳财一分钟</Watermark>
    </Page>
  );
}
